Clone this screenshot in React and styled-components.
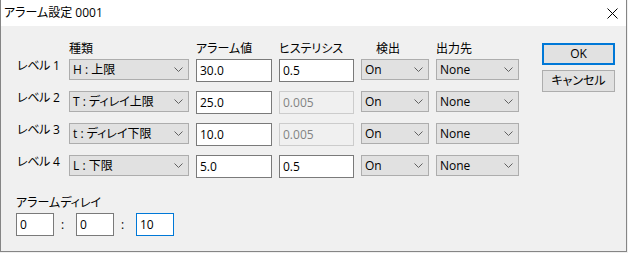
import React from "react";
import styled, { createGlobalStyle } from "styled-components";

const GlobalStyle = createGlobalStyle`
  html, body {
    margin: 0;
    padding: 0;
    background: #f0f0f0;
  }
  body {
    font-family: "Open Sans", "Noto Sans CJK JP", sans-serif;
    font-size: 12px;
    font-feature-settings: "palt";
    color: #000;
  }
`;

const Window = styled.div`
  width: 627px;
  height: 252px;
  box-sizing: border-box;
  border: 1px solid #858585;
  border-top: none;
  background: #f0f0f0;
  display: flex;
  flex-direction: column;
`;

const TitleBar = styled.div`
  height: 26px;
  flex-shrink: 0;
  background: #fff;
  display: flex;
  align-items: center;
  justify-content: space-between;
  padding-left: 3px;
`;

const Title = styled.span`
  font-size: 12px;
  line-height: 14px;
`;

const CloseButton = styled.div`
  width: 28px;
  height: 26px;
  display: flex;
  align-items: center;
  justify-content: center;
`;

const Body = styled.div`
  display: flex;
  gap: 23px;
  padding: 16px 0 0 15px;
`;

const Form = styled.div`
  display: flex;
  flex-direction: column;
`;

const Columns = styled.div`
  display: grid;
  grid-template-columns: 46px 120px 76px 75px 68px 83px;
  column-gap: 7px;
`;

const HeaderRow = styled(Columns)`
  height: 14px;
  margin-bottom: 3px;
`;

const HeaderCell = styled.div`
  line-height: 14px;
  padding-left: ${(p) => p.$indent || 0}px;
  white-space: nowrap;
`;

const Rows = styled(Columns)`
  grid-auto-rows: 23px;
  row-gap: 9px;
`;

const LevelLabel = styled.div`
  padding: 0 0 0 1px;
  line-height: 14px;
  white-space: nowrap;
  letter-spacing: -0.3px;
`;

const Combo = styled.div`
  height: 21px;
  box-sizing: border-box;
  border: 1px solid #adadad;
  background: #e1e1e1;
  display: flex;
  align-items: center;
  justify-content: space-between;
  padding: 0 5px 0 3px;
  line-height: 14px;
  white-space: nowrap;
`;

const TextBox = styled.input`
  width: ${(p) => (p.$width ? `${p.$width}px` : "100%")};
  height: 23px;
  box-sizing: border-box;
  margin: 0;
  border: 1px solid ${(p) => (p.$focused ? "#0078d7" : p.disabled ? "#cccccc" : "#7a7a7a")};
  background: ${(p) => (p.disabled ? "#f0f0f0" : "#fff")};
  color: ${(p) => (p.disabled ? "#838383" : "#000")};
  padding: 0 3px;
  font: inherit;
  font-size: 12px;
  outline: none;
  &:disabled {
    -webkit-text-fill-color: #838383;
  }
`;

const ButtonColumn = styled.div`
  display: flex;
  flex-direction: column;
  gap: 5px;
  margin-top: 1px;
`;

const Button = styled.div`
  width: 73px;
  height: 22px;
  box-sizing: border-box;
  border: ${(p) => (p.$default ? "2px solid #0078d7" : "1px solid #adadad")};
  background: #e1e1e1;
  display: flex;
  align-items: center;
  justify-content: center;
  line-height: 14px;
`;

const DelaySection = styled.div`
  margin-top: 18px;
  display: flex;
  flex-direction: column;
  gap: 3px;
`;

const DelayLabel = styled.div`
  line-height: 14px;
`;

const DelayRow = styled.div`
  display: flex;
  align-items: center;
`;

const Colon = styled.span`
  width: 22px;
  box-sizing: border-box;
  padding-left: 7px;
  line-height: 14px;
`;

const Chevron = () => (
  <svg width="9" height="5" viewBox="0 0 9 5">
    <polyline points="0.5,0.5 4.5,4.5 8.5,0.5" fill="none" stroke="#606060" strokeWidth="1" />
  </svg>
);

const Select = ({ value }) => (
  <Combo>
    <span>{value}</span>
    <Chevron />
  </Combo>
);

const levels = [
  { name: "レベル 1", kind: "H : 上限", value: "30.0", hys: "0.5", hysOn: true },
  { name: "レベル 2", kind: "T : ディレイ上限", value: "25.0", hys: "0.005", hysOn: false },
  { name: "レベル 3", kind: "t : ディレイ下限", value: "10.0", hys: "0.005", hysOn: false },
  { name: "レベル 4", kind: "L : 下限", value: "5.0", hys: "0.5", hysOn: true },
];

export default function App() {
  return (
    <>
      <GlobalStyle />
      <Window>
        <TitleBar>
          <Title>アラーム設定 0001</Title>
          <CloseButton>
            <svg width="11" height="11" viewBox="0 0 11 11">
              <path d="M0.5 0.5 L10.5 10.5 M10.5 0.5 L0.5 10.5" stroke="#000" strokeWidth="1" />
            </svg>
          </CloseButton>
        </TitleBar>
        <Body>
          <Form>
            <HeaderRow>
              <div />
              <HeaderCell>種類</HeaderCell>
              <HeaderCell>アラーム値</HeaderCell>
              <HeaderCell>ヒステリシス</HeaderCell>
              <HeaderCell $indent={15}>検出</HeaderCell>
              <HeaderCell>出力先</HeaderCell>
            </HeaderRow>
            <Rows>
              {levels.map((l) => (
                <React.Fragment key={l.name}>
                  <LevelLabel>{l.name}</LevelLabel>
                  <Select value={l.kind} />
                  <TextBox readOnly value={l.value} />
                  <TextBox readOnly value={l.hys} disabled={!l.hysOn} />
                  <Select value="On" />
                  <Select value="None" />
                </React.Fragment>
              ))}
            </Rows>
            <DelaySection>
              <DelayLabel>アラームディレイ</DelayLabel>
              <DelayRow>
                <TextBox readOnly value="0" $width={38} />
                <Colon>:</Colon>
                <TextBox readOnly value="0" $width={38} />
                <Colon>:</Colon>
                <TextBox readOnly value="10" $width={38} $focused />
              </DelayRow>
            </DelaySection>
          </Form>
          <ButtonColumn>
            <Button $default>OK</Button>
            <Button>キャンセル</Button>
          </ButtonColumn>
        </Body>
      </Window>
    </>
  );
}
